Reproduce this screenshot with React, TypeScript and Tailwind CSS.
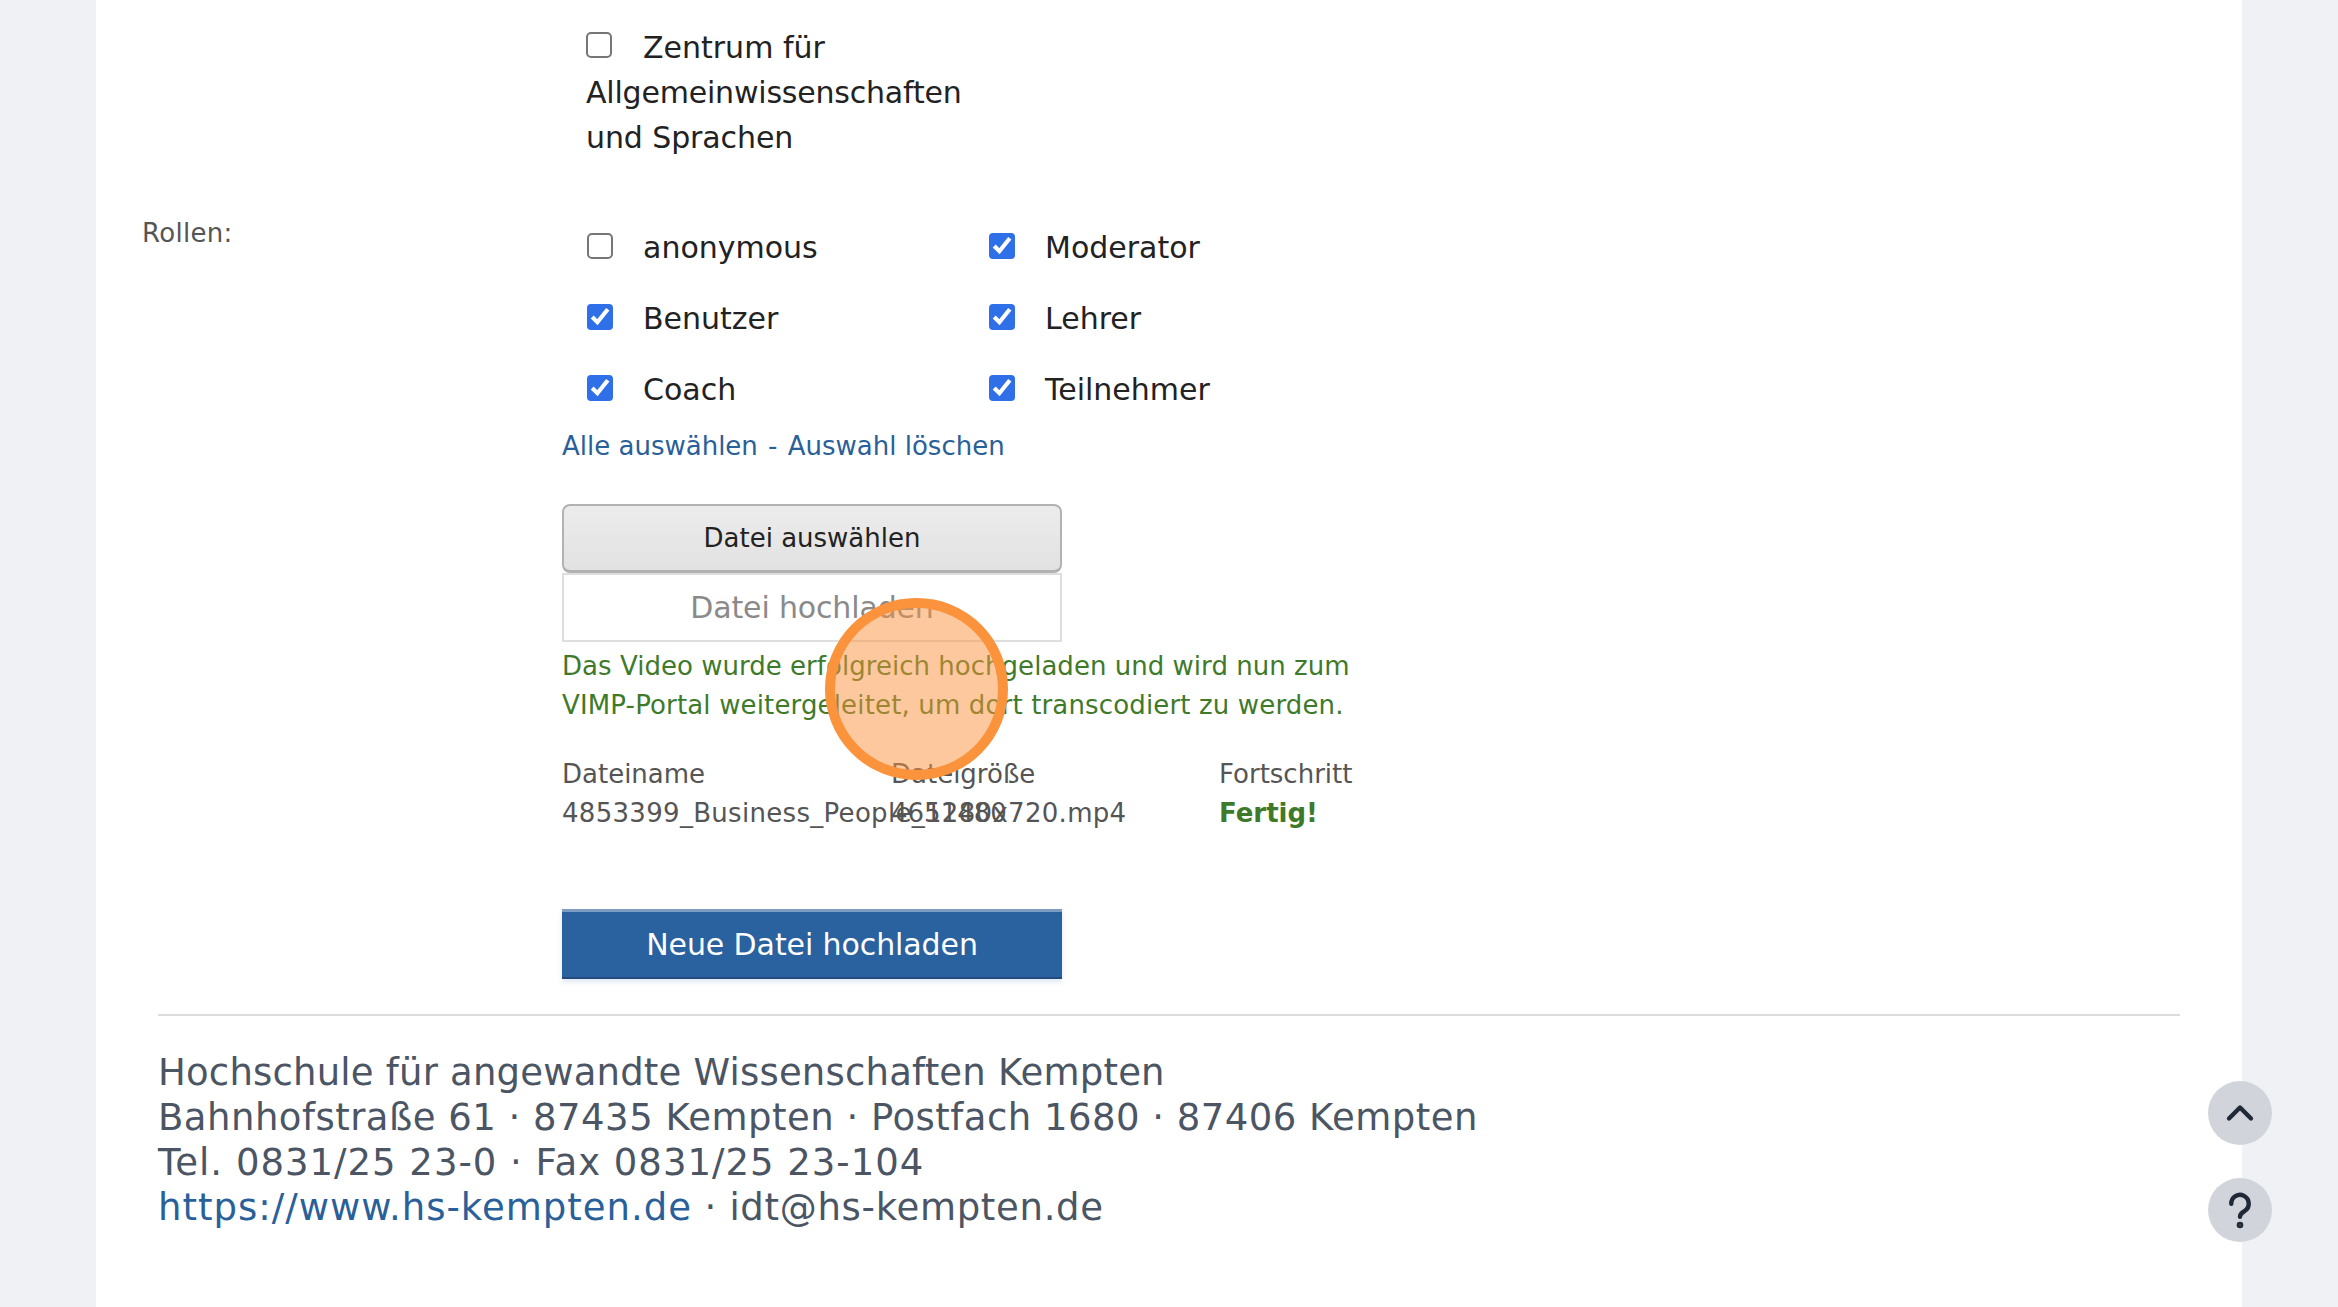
import { ChevronUp } from "lucide-react";

const roles = [
  { name: "anonymous", checked: false },
  { name: "Moderator", checked: true },
  { name: "Benutzer", checked: true },
  { name: "Lehrer", checked: true },
  { name: "Coach", checked: true },
  { name: "Teilnehmer", checked: true },
];

const font = { fontFamily: '"DejaVu Sans", sans-serif' };

function Check({ checked }: { checked: boolean }) {
  return (
    <input
      type="checkbox"
      readOnly
      checked={checked}
      className="w-[13px] h-[13px] m-0 [zoom:2] accent-[#2f6fe8] shrink-0"
    />
  );
}

export default function App() {
  return (
    <div className="relative h-[1307px] overflow-hidden bg-[#eff1f5]" style={font}>
      <div className="ml-[96px] w-[2146px] h-full bg-white pt-[25px]">
        <div className="pl-[490px] text-[30px] leading-[45px] text-[#222]">
          <div className="w-[400px]">
            <Check checked={false} />
            <span className="ml-[31px]">Zentrum für</span>
            <br />
            <span className="tracking-[-0.2px]">Allgemeinwissenschaften</span>
            <br />
            <span className="tracking-[-0.1px]">und Sprachen</span>
          </div>
        </div>

        <div className="flex mt-[65px]">
          <div className="w-[466px] pl-[46px] text-[26px] leading-[39px] text-[#555] -mt-[11px] tracking-[0.3px]">Rollen:</div>
          <div className="w-[1200px]">
            <div className="grid grid-cols-[402px_402px] gap-y-[26px] pl-[25px] text-[30px] leading-[45px] text-[#222]">
              {roles.map((r) => (
                <div key={r.name} className="flex items-center gap-[30px]">
                  <span className="flex mb-[3px]">
                    <Check checked={r.checked} />
                  </span>
                  <span>{r.name}</span>
                </div>
              ))}
            </div>
            <div className="mt-[15px] text-[26px] leading-[39px] text-[#2a6099]">
              Alle auswählen<span className="mx-[2px]"> - </span>Auswahl löschen
            </div>

            <button className="block mt-[38px] w-[500px] h-[69px] rounded-[8px] border-2 border-[#b2b2b2] border-b-[3px] bg-linear-to-b from-[#ececec] to-[#e2e2e2] text-[26px] text-[#222]">
              Datei auswählen
            </button>
            <div className="w-[500px] h-[69px] border-2 border-[#dedede] flex items-center justify-center text-[30px] tracking-[-0.15px] text-[#8a8a8a]">
              Datei hochladen
            </div>
            <div className="mt-[5px] text-[26px] leading-[39px] text-[#3f7a2a]">
              <span className="tracking-[0.03px]">Das Video wurde erfolgreich hochgeladen und wird nun zum</span>
              <br />
              <span className="tracking-[0.15px]">VIMP-Portal weitergeleitet, um dort transcodiert zu werden.</span>
            </div>

            <div className="mt-[30px] grid grid-cols-[329px_328px_300px] text-[26px] leading-[39px] text-[#555]">
              <div>Dateiname</div>
              <div>Dateigröße</div>
              <div>Fortschritt</div>
              <div className="whitespace-nowrap tracking-[0.3px]">4853399_Business_People_1280x720.mp4</div>
              <div>4651480</div>
              <div className="font-bold text-[#3f7a2a]">Fertig!</div>
            </div>

            <button className="block mt-[76px] w-[500px] h-[70px] bg-[#2a619f] shadow-[inset_0_3px_0_#7d9cc2,inset_0_-2px_0_#234a7d,0_3px_5px_rgba(42,97,159,0.15)] text-[30px] tracking-[-0.1px] text-white">
              Neue Datei hochladen
            </button>
          </div>
        </div>

        <div className="mx-[62px] mt-[35px] border-t-2 border-[#dcdcdc] pt-[34px] text-[37px] leading-[45px] text-[#4b5563]">
          <div className="tracking-[0.2px]">Hochschule für angewandte Wissenschaften Kempten</div>
          <div className="tracking-[0.48px]">Bahnhofstraße 61 · 87435 Kempten · Postfach 1680 · 87406 Kempten</div>
          <div className="tracking-[1px]">Tel. 0831/25 23-0 · Fax 0831/25 23-104</div>
          <div className="tracking-[0.7px]">
            <span className="tracking-[1px] text-[#2a6099]">https://www.hs-kempten.de</span> · idt@hs-kempten.de
          </div>
        </div>
      </div>

      {/* click marker */}
      <div className="absolute left-[825px] top-[598px] w-[183px] h-[182px] rounded-full border-[10px] border-[#fb923c] bg-[#fb923c]/50" />

      <div className="absolute left-[2208px] top-[1081px] w-[64px] h-[64px] rounded-full bg-[#d1d5db] flex items-center justify-center text-[#1f2937]">
        <ChevronUp size={44} strokeWidth={2.4} />
      </div>
      <div className="absolute left-[2208px] top-[1178px] w-[64px] h-[64px] rounded-full bg-[#d1d5db] flex items-center justify-center">
        <svg width="38" height="38" viewBox="0 0 24 24" fill="none" stroke="#1f2937" strokeWidth="2.8" strokeLinecap="round">
          <path d="M6.5 8a5.5 5.5 0 1 1 8.6 4.5c-2 1.3-3.1 2-3.1 3.8" />
          <circle cx="12" cy="21.5" r="0.7" fill="#1f2937" />
        </svg>
      </div>
    </div>
  );
}
